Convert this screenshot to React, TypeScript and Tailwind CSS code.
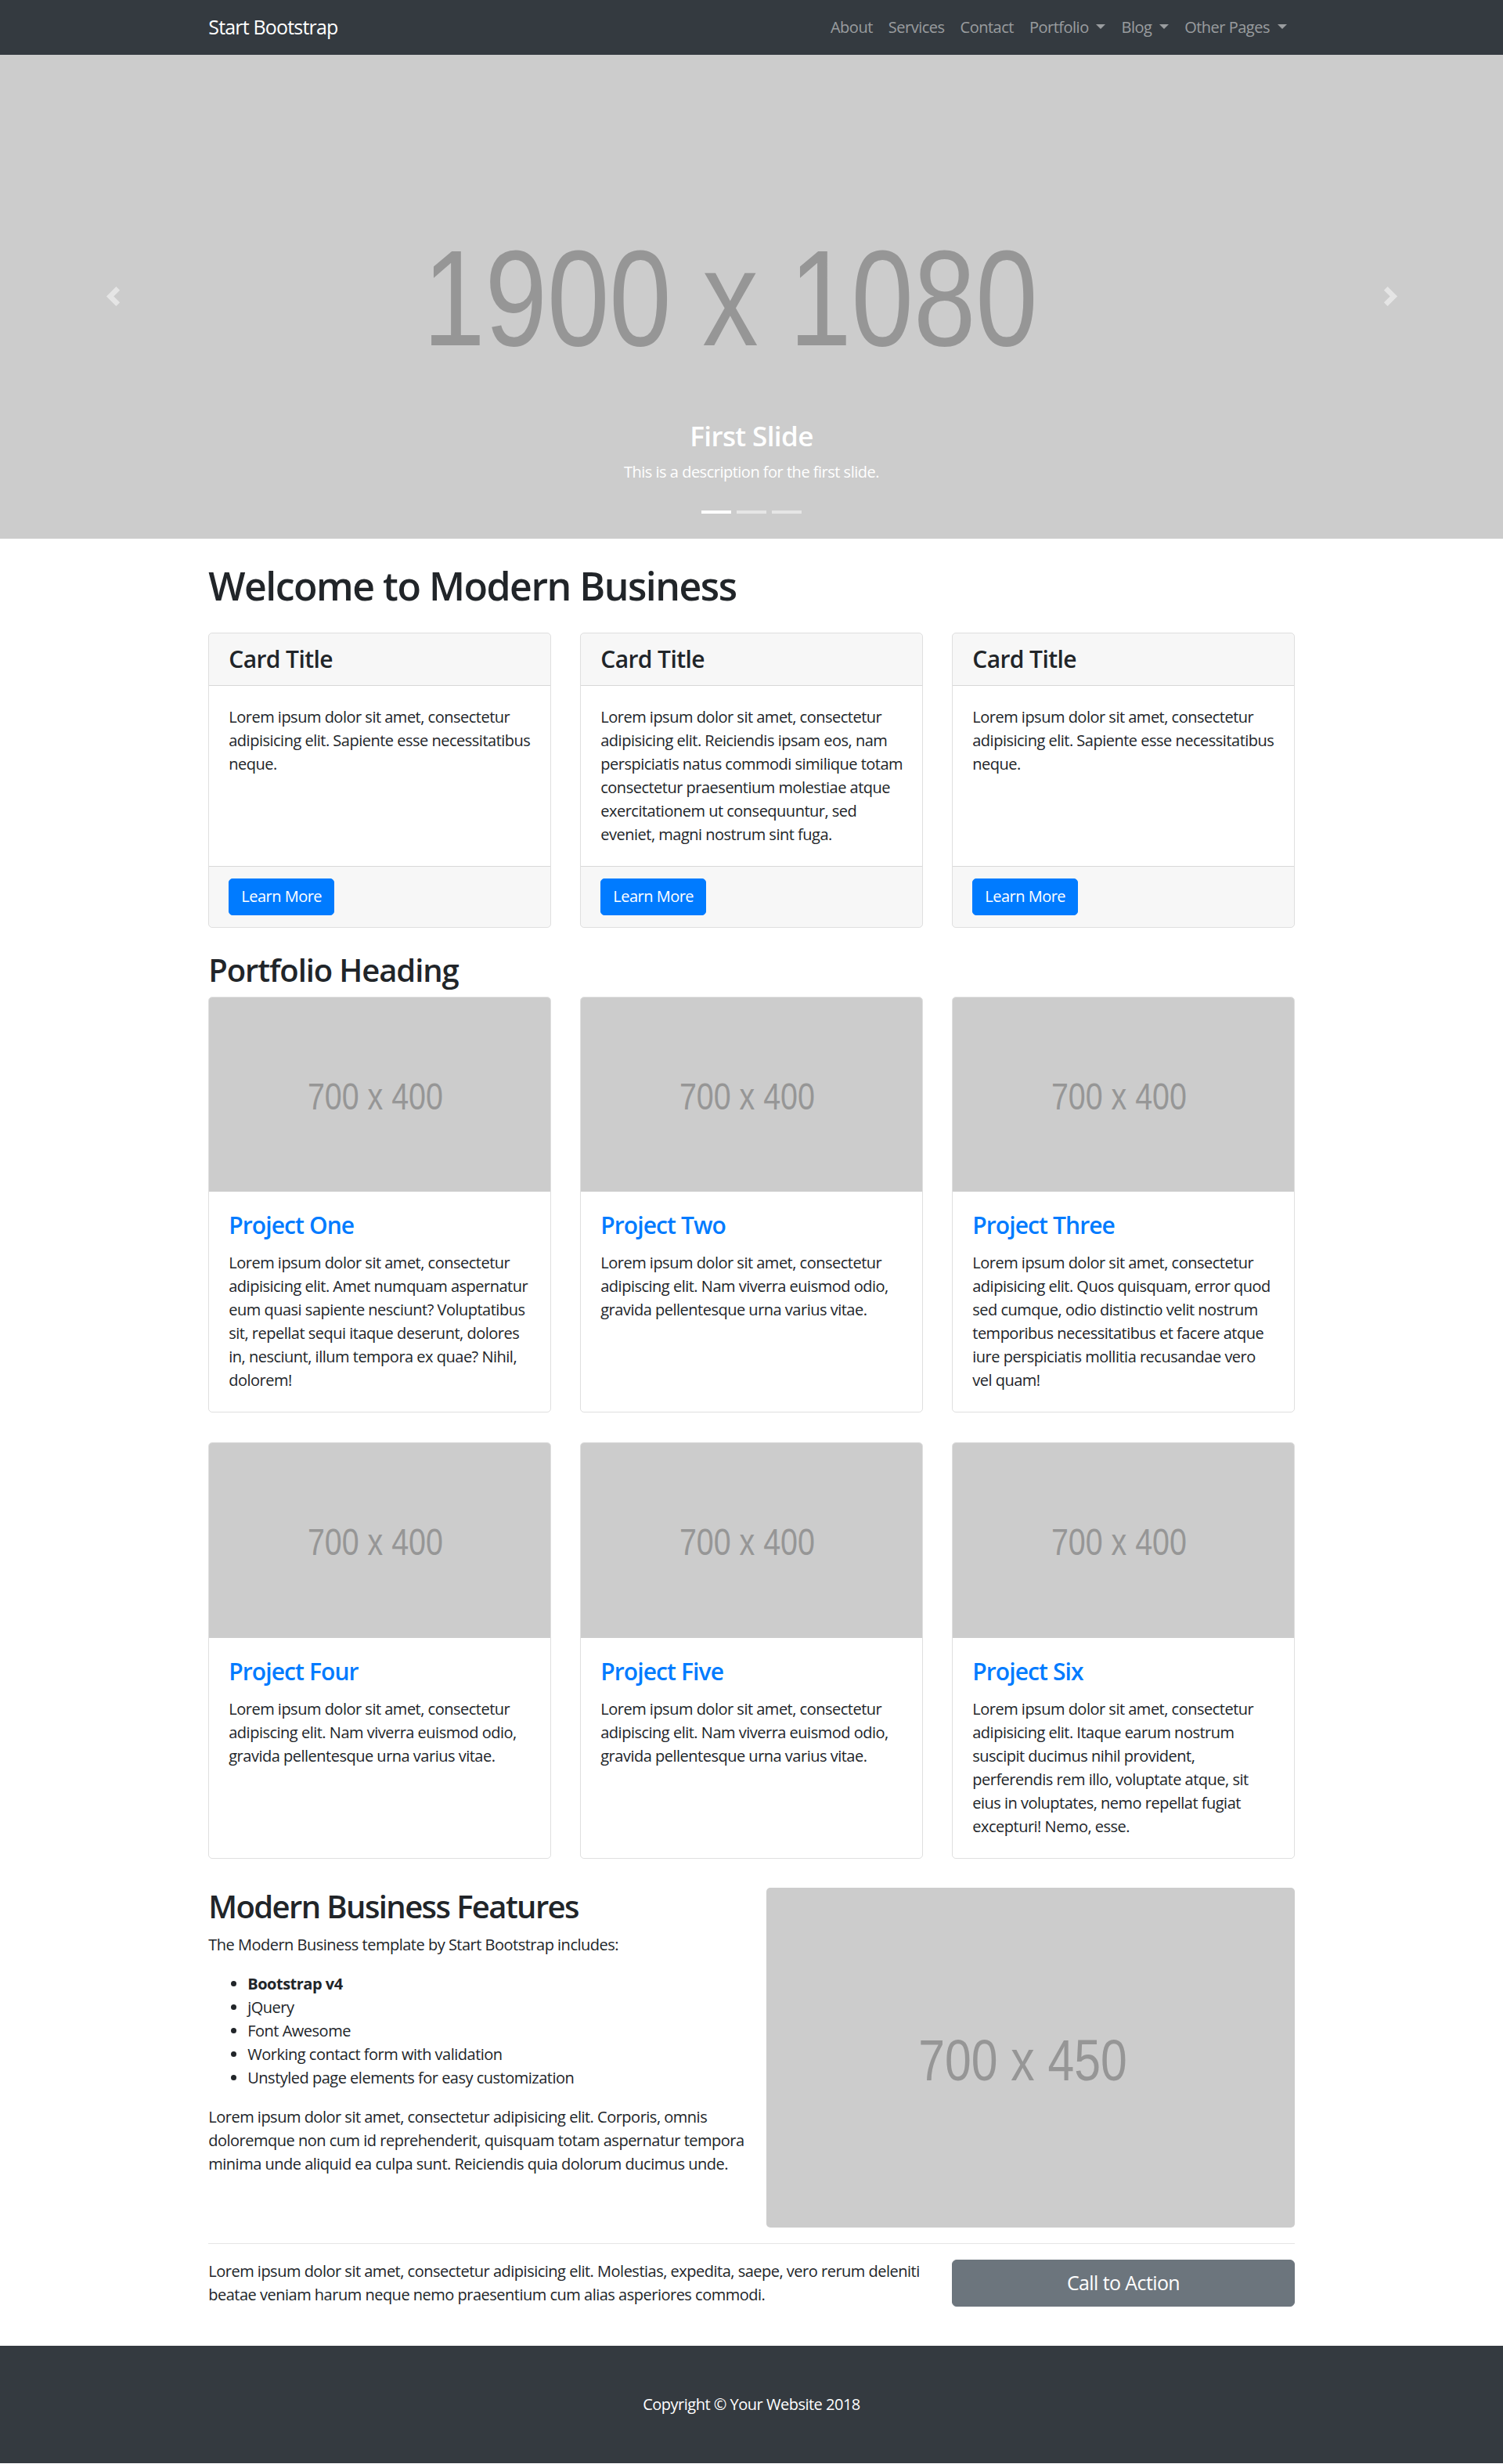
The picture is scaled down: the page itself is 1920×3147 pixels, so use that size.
import React from "react";

const Caret = () => (
  <>
    {" "}
    <span className="inline-block ml-[0.255em] align-[0.255em] w-0 h-0 border-t-[0.3em] border-t-current border-x-[0.3em] border-x-transparent border-b-0" />
  </>
);

const Lines = ({ lines }: { lines: string[] }) => (
  <>
    {lines.map((l, i) => (
      <span key={i} className="block whitespace-nowrap">
        {l}
      </span>
    ))}
  </>
);

const cards: string[][] = [
  [
    "Lorem ipsum dolor sit amet, consectetur",
    "adipisicing elit. Sapiente esse necessitatibus",
    "neque.",
  ],
  [
    "Lorem ipsum dolor sit amet, consectetur",
    "adipisicing elit. Reiciendis ipsam eos, nam",
    "perspiciatis natus commodi similique totam",
    "consectetur praesentium molestiae atque",
    "exercitationem ut consequuntur, sed",
    "eveniet, magni nostrum sint fuga.",
  ],
  [
    "Lorem ipsum dolor sit amet, consectetur",
    "adipisicing elit. Sapiente esse necessitatibus",
    "neque.",
  ],
];

const short = [
  "Lorem ipsum dolor sit amet, consectetur",
  "adipiscing elit. Nam viverra euismod odio,",
  "gravida pellentesque urna varius vitae.",
];

const projects: { title: string; lines: string[] }[] = [
  {
    title: "Project One",
    lines: [
      "Lorem ipsum dolor sit amet, consectetur",
      "adipisicing elit. Amet numquam aspernatur",
      "eum quasi sapiente nesciunt? Voluptatibus",
      "sit, repellat sequi itaque deserunt, dolores",
      "in, nesciunt, illum tempora ex quae? Nihil,",
      "dolorem!",
    ],
  },
  { title: "Project Two", lines: short },
  {
    title: "Project Three",
    lines: [
      "Lorem ipsum dolor sit amet, consectetur",
      "adipisicing elit. Quos quisquam, error quod",
      "sed cumque, odio distinctio velit nostrum",
      "temporibus necessitatibus et facere atque",
      "iure perspiciatis mollitia recusandae vero",
      "vel quam!",
    ],
  },
  { title: "Project Four", lines: short },
  { title: "Project Five", lines: short },
  {
    title: "Project Six",
    lines: [
      "Lorem ipsum dolor sit amet, consectetur",
      "adipisicing elit. Itaque earum nostrum",
      "suscipit ducimus nihil provident,",
      "perferendis rem illo, voluptate atque, sit",
      "eius in voluptates, nemo repellat fugiat",
      "excepturi! Nemo, esse.",
    ],
  },
];

const placeholderFont =
  "inline-block scale-x-[0.82] font-['Liberation_Sans',Arial,sans-serif] text-[#969696] leading-none tracking-normal";

export default function App() {
  return (
    <div className="w-full bg-white font-['Open_Sans','Noto_Sans',sans-serif] text-[20px] leading-[30px] text-[#212529] tracking-[-0.5px]">
      {/* Navbar */}
      <nav className="h-[70px] bg-[#343a40]">
        <div className="w-[1425px] h-full mx-auto px-[18.75px] flex items-center justify-between">
          <a className="text-[25px] leading-[37.5px] text-white tracking-[-0.82px]">Start Bootstrap</a>
          <ul className="flex items-center text-[rgba(255,255,255,0.5)]">
            <li className="px-[10px] py-[10px]">About</li>
            <li className="px-[10px] py-[10px]">Services</li>
            <li className="px-[10px] py-[10px]">Contact</li>
            <li className="px-[10px] py-[10px]">
              Portfolio
              <Caret />
            </li>
            <li className="px-[10px] py-[10px]">
              Blog
              <Caret />
            </li>
            <li className="px-[10px] py-[10px]">
              Other Pages
              <Caret />
            </li>
          </ul>
        </div>
      </nav>

      {/* Hero carousel */}
      <header className="relative h-[617.5px] bg-[#cccccc] overflow-hidden">
        <div className="absolute inset-0 flex items-center justify-center">
          <span className={`${placeholderFont} text-[174px] mr-[54px] mt-[4px]`}>1900 x 1080</span>
        </div>
        <div className="absolute left-0 top-0 bottom-0 w-[15%] flex items-center justify-center opacity-50">
          <svg width="25" height="25" viewBox="0 0 8 8" fill="#fff">
            <path d="M5.25 0l-4 4 4 4 1.5-1.5-2.5-2.5 2.5-2.5-1.5-1.5z" />
          </svg>
        </div>
        <div className="absolute right-0 top-0 bottom-0 w-[15%] flex items-center justify-center opacity-50">
          <svg width="25" height="25" viewBox="0 0 8 8" fill="#fff">
            <path d="M2.75 0l-1.5 1.5 2.5 2.5-2.5 2.5 1.5 1.5 4-4-4-4z" />
          </svg>
        </div>
        <div className="absolute left-[15%] right-[15%] bottom-[25px] pt-[25px] pb-[25px] text-center text-white">
          <h3 className="text-[35px] leading-[42px] mb-[10px] font-semibold tracking-[-0.6px]">First Slide</h3>
          <p className="mb-[20px]">This is a description for the first slide.</p>
        </div>
        <div className="absolute left-0 right-0 bottom-[32px] flex justify-center gap-[7.5px]">
          <span className="w-[37.5px] h-[4px] bg-white" />
          <span className="w-[37.5px] h-[4px] bg-[rgba(255,255,255,0.5)]" />
          <span className="w-[37.5px] h-[4px] bg-[rgba(255,255,255,0.5)]" />
        </div>
      </header>

      {/* Page content */}
      <div className="w-[1425px] mx-auto px-[18.75px]">
        <h1 className="mt-[30px] mb-[30px] text-[50px] leading-[60px] font-semibold tracking-[-1.5px]">
          Welcome to Modern Business
        </h1>

        <div className="grid grid-cols-3 gap-x-[37.5px] mb-[30px]">
          {cards.map((lines, i) => (
            <div key={i} className="flex flex-col border border-[rgba(0,0,0,0.125)] rounded-[5px] overflow-hidden">
              <h4 className="px-[25px] py-[15px] text-[30px] leading-[36px] font-semibold tracking-[-0.6px] bg-[rgba(0,0,0,0.03)] border-b border-[rgba(0,0,0,0.125)]">
                Card Title
              </h4>
              <div className="flex-1 p-[25px]">
                <p>
                  <Lines lines={lines} />
                </p>
              </div>
              <div className="px-[25px] py-[15px] bg-[rgba(0,0,0,0.03)] border-t border-[rgba(0,0,0,0.125)]">
                <a className="inline-block px-[15px] py-[7.5px] leading-[30px] bg-[#007bff] border border-[#007bff] rounded-[5px] text-white">
                  Learn More
                </a>
              </div>
            </div>
          ))}
        </div>

        <h2 className="text-[40px] leading-[48px] mb-[10px] font-semibold tracking-[-1.1px]">Portfolio Heading</h2>

        <div className="grid grid-cols-3 gap-x-[37.5px] gap-y-[37.5px] mb-[37.5px]">
          {projects.map((p, i) => (
            <div key={i} className="border border-[rgba(0,0,0,0.125)] rounded-[5px] overflow-hidden">
              <div className="h-[248.86px] bg-[#cccccc] flex items-center justify-center">
                <span className={`${placeholderFont} text-[48px] mr-[12px] mt-[6px]`}>700 x 400</span>
              </div>
              <div className="p-[25px]">
                <h4 className="text-[30px] leading-[36px] mb-[15px] font-semibold text-[#007bff] tracking-[-0.9px]">
                  {p.title}
                </h4>
                <p>
                  <Lines lines={p.lines} />
                </p>
              </div>
            </div>
          ))}
        </div>

        {/* Features */}
        <div className="grid grid-cols-2 gap-x-[37.5px]">
          <div>
            <h2 className="text-[40px] leading-[48px] mb-[10px] font-semibold tracking-[-1.6px]">
              Modern Business Features
            </h2>
            <p className="mb-[20px]">The Modern Business template by Start Bootstrap includes:</p>
            <ul className="list-disc pl-[50px] mb-[20px]">
              <li>
                <strong className="font-bold">Bootstrap v4</strong>
              </li>
              <li>jQuery</li>
              <li>Font Awesome</li>
              <li>Working contact form with validation</li>
              <li>Unstyled page elements for easy customization</li>
            </ul>
            <p className="mb-[20px]">
              <Lines
                lines={[
                  "Lorem ipsum dolor sit amet, consectetur adipisicing elit. Corporis, omnis",
                  "doloremque non cum id reprehenderit, quisquam totam aspernatur tempora",
                  "minima unde aliquid ea culpa sunt. Reiciendis quia dolorum ducimus unde.",
                ]}
              />
            </p>
          </div>
          <div className="h-[433.93px] bg-[#cccccc] rounded-[5px] flex items-center justify-center">
            <span className={`${placeholderFont} text-[74px] mr-[19px] mt-[8px]`}>700 x 450</span>
          </div>
        </div>

        <hr className="my-[20px] border-0 border-t border-[rgba(0,0,0,0.1)]" />

        {/* Call to Action */}
        <div className="grid grid-cols-[912.5px_437.5px] gap-x-[37.5px] mb-[30px]">
          <p className="mb-[20px]">
            <Lines
              lines={[
                "Lorem ipsum dolor sit amet, consectetur adipisicing elit. Molestias, expedita, saepe, vero rerum deleniti",
                "beatae veniam harum neque nemo praesentium cum alias asperiores commodi.",
              ]}
            />
          </p>
          <div>
            <a className="block w-full text-center px-[20px] py-[10px] text-[25px] leading-[37.5px] tracking-[-0.6px] bg-[#6c757d] border border-[#6c757d] rounded-[6px] text-white">
              Call to Action
            </a>
          </div>
        </div>
      </div>

      {/* Footer */}
      <footer className="bg-[#343a40] py-[60px]">
        <div className="w-[1425px] mx-auto px-[18.75px]">
          <p className="text-center text-white">Copyright &copy; Your Website 2018</p>
        </div>
      </footer>
    </div>
  );
}
